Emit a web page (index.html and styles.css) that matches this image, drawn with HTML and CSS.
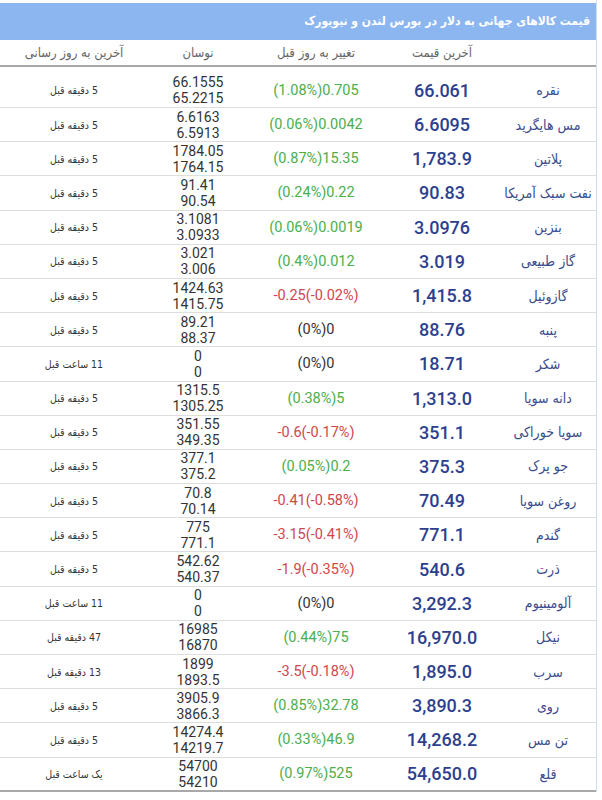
FILE: index.html
```html
<!DOCTYPE html>
<html lang="fa">
<head>
<meta charset="utf-8">
<link rel="stylesheet" href="styles.css">
</head>
<body>
<div class="box" dir="rtl">
  <div class="title">قیمت کالاهای جهانی به دلار در بورس لندن و نیویورک</div>
  <div class="row head">
    <div></div>
    <div>آخرین قیمت</div>
    <div>تغییر به روز قبل</div>
    <div>نوسان</div>
    <div>آخرین به روز رسانی</div>
  </div>
  <div class="rows">
    <div class="row first"><div class="name">نقره</div><div class="price">66.061</div><div class="chg up" dir="ltr">(1.08%)0.705</div><div class="rng">66.1555<br>65.2215</div><div class="upd">5 دقیقه قبل</div></div>
    <div class="row"><div class="name">مس هایگرید</div><div class="price">6.6095</div><div class="chg up" dir="ltr">(0.06%)0.0042</div><div class="rng">6.6163<br>6.5913</div><div class="upd">5 دقیقه قبل</div></div>
    <div class="row"><div class="name">پلاتین</div><div class="price">1,783.9</div><div class="chg up" dir="ltr">(0.87%)15.35</div><div class="rng">1784.05<br>1764.15</div><div class="upd">5 دقیقه قبل</div></div>
    <div class="row"><div class="name">نفت سبک آمریکا</div><div class="price">90.83</div><div class="chg up" dir="ltr">(0.24%)0.22</div><div class="rng">91.41<br>90.54</div><div class="upd">5 دقیقه قبل</div></div>
    <div class="row"><div class="name">بنزین</div><div class="price">3.0976</div><div class="chg up" dir="ltr">(0.06%)0.0019</div><div class="rng">3.1081<br>3.0933</div><div class="upd">5 دقیقه قبل</div></div>
    <div class="row"><div class="name">گاز طبیعی</div><div class="price">3.019</div><div class="chg up" dir="ltr">(0.4%)0.012</div><div class="rng">3.021<br>3.006</div><div class="upd">5 دقیقه قبل</div></div>
    <div class="row"><div class="name">گازوئیل</div><div class="price">1,415.8</div><div class="chg down" dir="ltr">-0.25(-0.02%)</div><div class="rng">1424.63<br>1415.75</div><div class="upd">5 دقیقه قبل</div></div>
    <div class="row"><div class="name">پنبه</div><div class="price">88.76</div><div class="chg" dir="ltr">(0%)0</div><div class="rng">89.21<br>88.37</div><div class="upd">5 دقیقه قبل</div></div>
    <div class="row"><div class="name">شکر</div><div class="price">18.71</div><div class="chg" dir="ltr">(0%)0</div><div class="rng">0<br>0</div><div class="upd">11 ساعت قبل</div></div>
    <div class="row"><div class="name">دانه سویا</div><div class="price">1,313.0</div><div class="chg up" dir="ltr">(0.38%)5</div><div class="rng">1315.5<br>1305.25</div><div class="upd">5 دقیقه قبل</div></div>
    <div class="row"><div class="name">سویا خوراکی</div><div class="price">351.1</div><div class="chg down" dir="ltr">-0.6(-0.17%)</div><div class="rng">351.55<br>349.35</div><div class="upd">5 دقیقه قبل</div></div>
    <div class="row"><div class="name">جو پرک</div><div class="price">375.3</div><div class="chg up" dir="ltr">(0.05%)0.2</div><div class="rng">377.1<br>375.2</div><div class="upd">5 دقیقه قبل</div></div>
    <div class="row"><div class="name">روغن سویا</div><div class="price">70.49</div><div class="chg down" dir="ltr">-0.41(-0.58%)</div><div class="rng">70.8<br>70.14</div><div class="upd">5 دقیقه قبل</div></div>
    <div class="row"><div class="name">گندم</div><div class="price">771.1</div><div class="chg down" dir="ltr">-3.15(-0.41%)</div><div class="rng">775<br>771.1</div><div class="upd">5 دقیقه قبل</div></div>
    <div class="row"><div class="name">ذرت</div><div class="price">540.6</div><div class="chg down" dir="ltr">-1.9(-0.35%)</div><div class="rng">542.62<br>540.37</div><div class="upd">5 دقیقه قبل</div></div>
    <div class="row"><div class="name">آلومینیوم</div><div class="price">3,292.3</div><div class="chg" dir="ltr">(0%)0</div><div class="rng">0<br>0</div><div class="upd">11 ساعت قبل</div></div>
    <div class="row"><div class="name">نیکل</div><div class="price">16,970.0</div><div class="chg up" dir="ltr">(0.44%)75</div><div class="rng">16985<br>16870</div><div class="upd">47 دقیقه قبل</div></div>
    <div class="row"><div class="name">سرب</div><div class="price">1,895.0</div><div class="chg down" dir="ltr">-3.5(-0.18%)</div><div class="rng">1899<br>1893.5</div><div class="upd">13 دقیقه قبل</div></div>
    <div class="row"><div class="name">روی</div><div class="price">3,890.3</div><div class="chg up" dir="ltr">(0.85%)32.78</div><div class="rng">3905.9<br>3866.3</div><div class="upd">5 دقیقه قبل</div></div>
    <div class="row"><div class="name">تن مس</div><div class="price">14,268.2</div><div class="chg up" dir="ltr">(0.33%)46.9</div><div class="rng">14274.4<br>14219.7</div><div class="upd">5 دقیقه قبل</div></div>
    <div class="row last"><div class="name">قلع</div><div class="price">54,650.0</div><div class="chg up" dir="ltr">(0.97%)525</div><div class="rng">54700<br>54210</div><div class="upd">یک ساعت قبل</div></div>
  </div>
</div>
</body>
</html>
```

FILE: styles.css
```css
* { box-sizing: border-box; }
html, body { margin: 0; padding: 0; background: #fff; }
body {
  font-family: Roboto, "DejaVu Sans", sans-serif;
  color: #333;
}
.box {
  width: 597px;
  padding-top: 3px;
  border-right: 1px solid #d3dce9;
}
.title {
  height: 37px;
  line-height: 37px;
  background: #8cb6f0;
  color: #fff;
  font-weight: bold;
  font-size: 12px;
  padding-right: 6px;
  text-align: right;
  font-family: "DejaVu Sans Condensed", "DejaVu Sans", sans-serif;
  font-stretch: condensed;
}
.row {
  display: grid;
  grid-template-columns: 96px 116px 136px 100px 1fr;
  align-items: center;
  height: 34.2px;
  border-bottom: 1px solid #dedede;
  text-align: center;
}
.head {
  height: 27px;
  border-bottom: 2px solid #a8a8a8;
  color: #666;
  font-size: 13px;
  font-family: "DejaVu Sans Condensed", "DejaVu Sans", sans-serif;
  font-stretch: condensed;
}
.row.first {
  height: 41px;
  padding-top: 6px;
}
.row.last {
  border-bottom: 2px solid #a8a8a8;
}
.name {
  color: #3b4b8c;
  font-size: 14px;
  font-family: "DejaVu Sans Condensed", "DejaVu Sans", sans-serif;
  font-stretch: condensed;
}
.price {
  color: #2d3f8f;
  font-size: 18px;
  font-weight: 500;
}
.chg {
  font-size: 14.5px;
  color: #333;
}
.chg.up { color: #4cae4c; }
.chg.down { color: #d0474b; }
.rng {
  font-size: 14px;
  line-height: 16px;
  color: #333;
}
.upd {
  font-size: 10.5px;
  color: #333;
  font-family: "DejaVu Sans Condensed", "DejaVu Sans", sans-serif;
  font-stretch: condensed;
}
```
